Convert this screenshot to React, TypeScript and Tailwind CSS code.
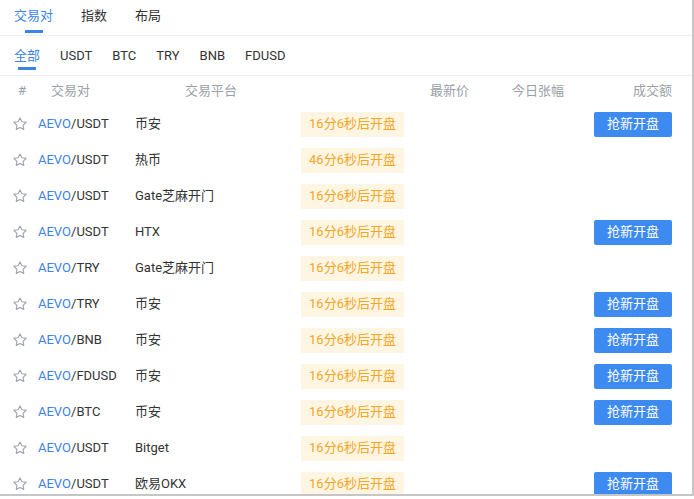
import { useState } from "react";

/* ===================== DATA ===================== */

type Linha = {
  base: string;
  quote: string;
  plataforma: string;
  contagem: string;
  botao: boolean;
};

const linhas: Linha[] = [
  { base: "AEVO", quote: "USDT", plataforma: "币安", contagem: "16分6秒后开盘", botao: true },
  { base: "AEVO", quote: "USDT", plataforma: "热币", contagem: "46分6秒后开盘", botao: false },
  { base: "AEVO", quote: "USDT", plataforma: "Gate芝麻开门", contagem: "16分6秒后开盘", botao: false },
  { base: "AEVO", quote: "USDT", plataforma: "HTX", contagem: "16分6秒后开盘", botao: true },
  { base: "AEVO", quote: "TRY", plataforma: "Gate芝麻开门", contagem: "16分6秒后开盘", botao: false },
  { base: "AEVO", quote: "TRY", plataforma: "币安", contagem: "16分6秒后开盘", botao: true },
  { base: "AEVO", quote: "BNB", plataforma: "币安", contagem: "16分6秒后开盘", botao: true },
  { base: "AEVO", quote: "FDUSD", plataforma: "币安", contagem: "16分6秒后开盘", botao: true },
  { base: "AEVO", quote: "BTC", plataforma: "币安", contagem: "16分6秒后开盘", botao: true },
  { base: "AEVO", quote: "USDT", plataforma: "Bitget", contagem: "16分6秒后开盘", botao: false },
  { base: "AEVO", quote: "USDT", plataforma: "欧易OKX", contagem: "16分6秒后开盘", botao: true },
];

const abas = ["交易对", "指数", "布局"];
const moedas = ["全部", "USDT", "BTC", "TRY", "BNB", "FDUSD"];

/* ===================== ICONS ===================== */

function Estrela() {
  return (
    <svg width="16" height="16" viewBox="0 0 24 24" fill="none" stroke="#9aa1ab" strokeWidth="1.6" strokeLinejoin="round">
      <path d="M12 2.8l2.8 5.9 6.4.8-4.7 4.4 1.2 6.4L12 17.2l-5.7 3.1 1.2-6.4-4.7-4.4 6.4-.8z" />
    </svg>
  );
}

/* ===================== COMPONENT ===================== */

export default function App() {
  const [aba, setAba] = useState(0);
  const [moeda, setMoeda] = useState(0);

  return (
    <div
      className="w-[694px] h-[499px] overflow-hidden bg-white text-[13px] text-[#333]"
      style={{ fontFamily: "Roboto, 'Noto Sans CJK SC', sans-serif" }}
    >
      <div className="w-[694px] h-[496px] border-r-2 border-b-2 border-[#c6c6c6] overflow-hidden">
        {/* abas principais */}
        <nav className="flex gap-[28px] h-[36px] border-b border-[#eeeeee] pl-[14px]">
          {abas.map((a, i) => (
            <button
              key={a}
              onClick={() => setAba(i)}
              className={`relative pb-[4px] text-[13px] leading-[20px] h-full ${
                aba === i ? "text-[#3b83e8]" : "text-[#333]"
              }`}
            >
              {a}
              {aba === i && (
                <span className="absolute left-1/2 -translate-x-1/2 bottom-[2px] w-[18px] h-[3px] bg-[#3b83e8]" />
              )}
            </button>
          ))}
        </nav>

        {/* filtro de moedas */}
        <nav className="flex gap-[20px] h-[40px] border-b border-[#eeeeee] pl-[14px]">
          {moedas.map((m, i) => (
            <button
              key={m}
              onClick={() => setMoeda(i)}
              className={`relative pt-[1px] text-[13px] leading-[20px] h-full ${
                moeda === i ? "text-[#3b83e8]" : "text-[#333]"
              }`}
            >
              {m}
              {moeda === i && (
                <span className="absolute left-1/2 -translate-x-1/2 bottom-[5px] w-[18px] h-[3px] bg-[#3b83e8]" />
              )}
            </button>
          ))}
        </nav>

        {/* cabeçalho */}
        <div className="flex items-center h-[30px] text-[#9aa0a8]">
          <span className="w-[38px] pl-[18px]">#</span>
          <span className="w-[147px] pl-[13px]">交易对</span>
          <span className="w-[245px]">交易平台</span>
          <span className="w-[82px]">最新价</span>
          <span className="w-[90px]">今日张幅</span>
          <span className="w-[70px] text-right">成交额</span>
        </div>

        {/* linhas */}
        {linhas.map((l, i) => (
          <div key={i} className="flex items-center h-[36px]">
            <span className="w-[38px] pl-[12px] flex items-center">
              <Estrela />
            </span>
            <span className="w-[97px]">
              <span className="text-[#3b83e8]">{l.base}</span>/{l.quote}
            </span>
            <span className="w-[166px]">{l.plataforma}</span>
            <span className="w-[293px]">
              <span className="inline-flex items-center justify-center w-[103px] h-[25px] bg-[#fef5e3] text-[#f5a623] text-[13px]">
                {l.contagem}
              </span>
            </span>
            <span className="w-[78px]">
              {l.botao && (
                <button className="w-[78px] h-[25px] rounded-[2px] bg-[#3d8af0] text-white text-[13px]">
                  抢新开盘
                </button>
              )}
            </span>
          </div>
        ))}
      </div>
    </div>
  );
}
